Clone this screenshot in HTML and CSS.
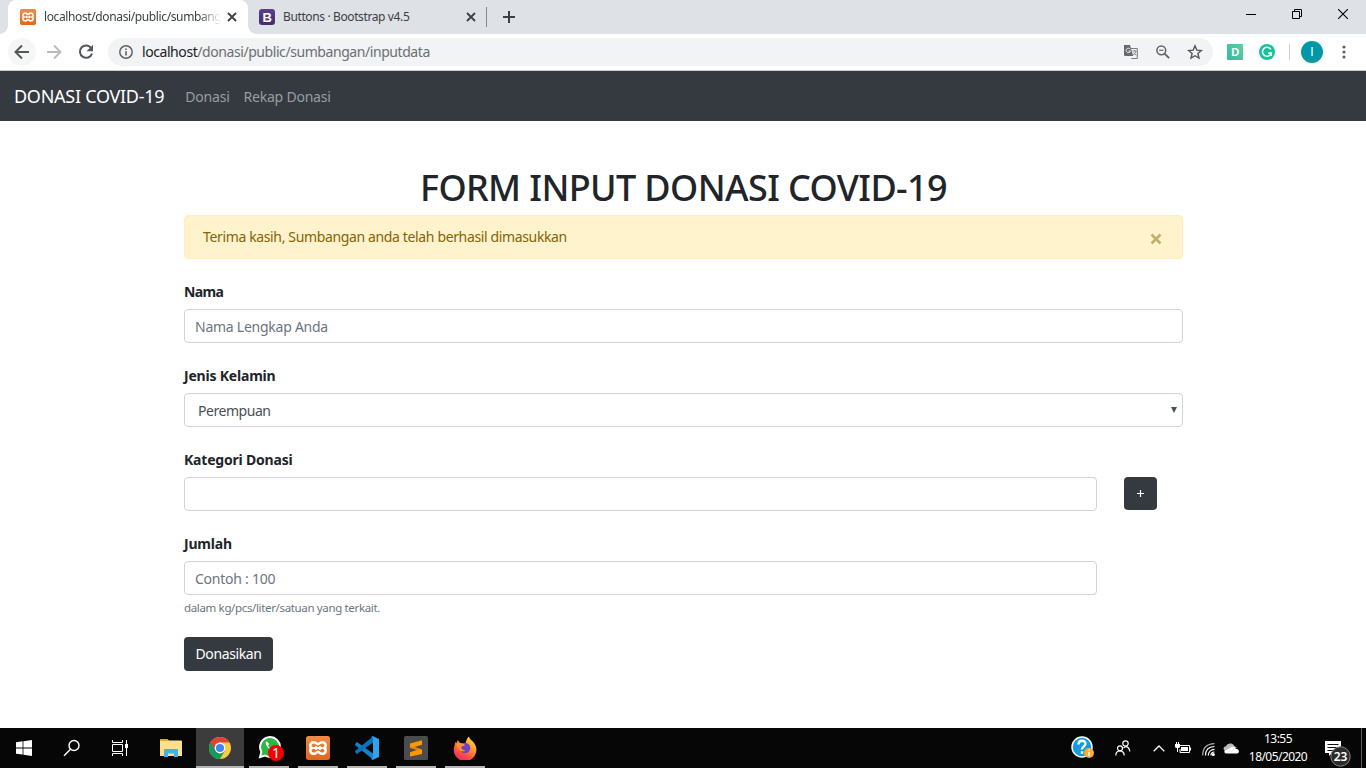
FILE: index.html
```html
<!DOCTYPE html>
<html lang="id">
<head>
<meta charset="utf-8">
<title>Donasi Covid-19</title>
<link rel="stylesheet" href="styles.css">
</head>
<body>
<svg class="defs" width="0" height="0">
  <defs>
    <linearGradient id="orange" x1="0" y1="0" x2="0" y2="1"><stop offset="0" stop-color="#f08b45"/><stop offset="1" stop-color="#e2661a"/></linearGradient>
    <linearGradient id="violet" x1="0" y1="0" x2="0" y2="1"><stop offset="0" stop-color="#5d3f8c"/><stop offset="1" stop-color="#462b6e"/></linearGradient>
    <linearGradient id="mint" x1="0" y1="1" x2="1" y2="0"><stop offset="0" stop-color="#30bb9a"/><stop offset="1" stop-color="#65cda4"/></linearGradient>
    <linearGradient id="fire" x1=".8" y1="0" x2=".3" y2="1"><stop offset="0" stop-color="#ffe044"/><stop offset=".4" stop-color="#ff9a28"/><stop offset=".75" stop-color="#ff4a45"/><stop offset="1" stop-color="#e72572"/></linearGradient>
    <symbol id="xampp" viewBox="0 0 24 24">
      <rect width="24" height="24" rx="2.5" fill="url(#orange)"/>
      <path d="M8 6.200c-4 0-5 4.600-2 5.800-3 1.200-2 5.800 2 5.800 2.200 0 2.700-2 4-2s1.800 2 4 2c4 0 5-4.600 2-5.800 3-1.200 2-5.800-2-5.800-2.200 0-2.700 2-4 2s-1.800-2-4-2z" fill="none" stroke="#fff" stroke-width="2.500"/>
      <path d="M8 12h8M10 10v4M14 10v4" stroke="#fff" stroke-width="1.800"/>
    </symbol>
  </defs>
</svg>

<header class="tabstrip">
  <div class="tab tab-active">
    <svg class="favicon" width="16" height="16"><use href="#xampp"/></svg>
    <span class="tab-title fade">localhost/donasi/public/sumbang</span>
    <svg class="close" width="10" height="10" viewBox="0 0 10 10"><path d="M1 1l8 8M9 1l-8 8" stroke="#3c4043" stroke-width="1.800"/></svg>
  </div>
  <div class="tab">
    <svg class="favicon" width="16" height="16" viewBox="0 0 16 16"><rect width="16" height="16" rx="3" fill="url(#violet)"/><text x="8" y="12.600" class="fav-b">B</text></svg>
    <span class="tab-title">Buttons · Bootstrap v4.5</span>
    <svg class="close" width="10" height="10" viewBox="0 0 10 10"><path d="M1 1l8 8M9 1l-8 8" stroke="#3c4043" stroke-width="1.800"/></svg>
  </div>
  <span class="tab-divider"></span>
  <svg class="newtab" width="12" height="12" viewBox="0 0 12 12"><path d="M6 0v12M0 6h12" stroke="#3c4043" stroke-width="2"/></svg>
  <div class="window-buttons">
    <svg width="10" height="10" viewBox="0 0 10 10"><path d="M0 5.500h10" stroke="#000"/></svg>
    <svg width="10" height="10" viewBox="0 0 10 10"><path d="M.5 2.500h7v7h-7zM2.500 2.500v-2h7v7h-2" fill="none" stroke="#000"/></svg>
    <svg width="10" height="10" viewBox="0 0 10 10"><path d="M0 0l10 10M10 0L0 10" stroke="#000" stroke-width="1.100"/></svg>
  </div>
</header>

<div class="toolbar">
  <span class="nav-back"><svg width="16" height="16" viewBox="0 0 16 16"><path d="M15 8H2M8 1.500L1.500 8 8 14.500" fill="none" stroke="#54585d" stroke-width="2"/></svg></span>
  <svg class="nav-fwd" width="16" height="16" viewBox="0 0 16 16"><path d="M1 8h13M8 1.500L14.500 8 8 14.500" fill="none" stroke="#babcbe" stroke-width="2"/></svg>
  <svg class="nav-reload" width="16" height="16" viewBox="0 0 16 16"><path d="M13.300 4.200A6.200 6.200 0 1 0 14 9.600" fill="none" stroke="#54585d" stroke-width="2"/><path d="M15 .8v6.400H8.600z" fill="#54585d"/></svg>
  <div class="omnibox">
    <svg width="14" height="14" viewBox="0 0 14 14"><circle cx="7" cy="7" r="6.200" fill="none" stroke="#5f6368" stroke-width="1.500"/><path d="M7 6.200v4.300M7 3.400v1.600" stroke="#5f6368" stroke-width="1.600"/></svg>
    <span class="url"><b>localhost</b>/donasi/public/sumbangan/inputdata</span>
    <svg class="ic-translate" width="14" height="14" viewBox="0 0 14 14"><path d="M6 3.500h7.300v10H7" fill="none" stroke="#787c80"/><path d="M0 0h6l3.200 11H1.200A1.200 1.200 0 0 1 0 10z" fill="#66696e"/><path d="M6.300 4.300A2.200 2.200 0 1 0 6.500 6H4.600M7.500 11l-.8 2.700L9.200 11" fill="none" stroke="#f1f3f4"/><path d="M8.500 6h4M10.500 5v1M12 6c-.4 2-1.500 3-3 4M9.800 7.500l2.500 3" fill="none" stroke="#787c80" stroke-width=".9"/></svg>
    <svg class="ic-zoom" width="14" height="14" viewBox="0 0 14 14"><circle cx="5.300" cy="5.300" r="4.400" fill="none" stroke="#5f6368" stroke-width="1.500"/><path d="M8.600 8.600l4.500 4.500" stroke="#5f6368" stroke-width="1.800"/><path d="M3.200 5.300h4.200" stroke="#5f6368" stroke-width="1.200"/></svg>
    <svg class="ic-star" width="16" height="16" viewBox="0 0 16 16"><path d="M8 1.800l1.800 4.300 4.600.4-3.500 3 1.100 4.600L8 11.700l-4 2.400 1.100-4.600-3.500-3 4.600-.4z" fill="none" stroke="#54585d" stroke-width="1.400"/></svg>
  </div>
  <svg class="ext-d" width="16" height="16" viewBox="0 0 16 16"><rect width="16" height="16" rx="1" fill="url(#mint)"/><text x="8.200" y="12" class="ext-letter">D</text></svg>
  <svg class="ext-g" width="16" height="16" viewBox="0 0 16 16"><circle cx="8" cy="8" r="8" fill="#15c39a"/><path d="M11.800 5.400A4.500 4.500 0 1 0 12.300 9H9.200M12.300 9v3" fill="none" stroke="#fff" stroke-width="1.500"/></svg>
  <span class="bar-divider"></span>
  <span class="avatar">I</span>
  <svg class="kebab" width="4" height="14" viewBox="0 0 4 14"><g fill="#5f6368"><circle cx="2" cy="2" r="1.600"/><circle cx="2" cy="7" r="1.600"/><circle cx="2" cy="12" r="1.600"/></g></svg>
</div>

<nav class="navbar">
  <a class="brand">DONASI COVID-19</a>
  <a class="nav-link">Donasi</a>
  <a class="nav-link">Rekap Donasi</a>
</nav>

<main class="page">
  <h1>FORM INPUT DONASI COVID-19</h1>
  <div class="alert">
    <span class="alert-text">Terima kasih, Sumbangan anda telah berhasil dimasukkan</span>
    <svg class="dismiss" width="12" height="12" viewBox="0 0 12 12"><path d="M1.500 1.500l9 9M10.500 1.500l-9 9" stroke="#c3ae68" stroke-width="2.500"/></svg>
  </div>
  <form>
    <section class="group">
      <label class="tight">Nama</label>
      <div class="control muted">Nama Lengkap Anda</div>
    </section>
    <section class="group">
      <label>Jenis Kelamin</label>
      <div class="control select">Perempuan<svg width="6" height="6" viewBox="0 0 6 6"><path d="M0 0h6L3 6z" fill="#495057"/></svg></div>
    </section>
    <section class="group">
      <label>Kategori Donasi</label>
      <div class="row"><div class="control short"></div><button type="button" class="btn plus"><svg width="7" height="7" viewBox="0 0 7 7"><path d="M3.500 0v7M0 3.500h7" stroke="#fff" stroke-width="1.200"/></svg></button></div>
    </section>
    <section class="group">
      <label>Jumlah</label>
      <div class="control short muted">Contoh : 100</div>
      <small>dalam kg/pcs/liter/satuan yang terkait.</small>
    </section>
    <button type="button" class="btn submit">Donasikan</button>
  </form>
</main>

<footer class="taskbar">
  <span class="task wide"><svg width="16" height="16" viewBox="0 0 16 16"><path d="M0 2.300L6.600 1.300v6.200H0zM7.400 1.200L16 0v7.500H7.400zM0 8.400h6.600v6.200L0 13.700zM7.400 8.400H16V16l-8.600-1.200z" fill="#fff"/></svg></span>
  <span class="task wide"><svg width="18" height="18" viewBox="0 0 18 18"><circle cx="11" cy="6.500" r="5" fill="none" stroke="#fff" stroke-width="1.400"/><path d="M7.500 10.200L1 16.700" stroke="#fff" stroke-width="1.400"/></svg></span>
  <span class="task wide"><svg width="16" height="16" viewBox="0 0 16 16"><path d="M.5 0v2.500h10V0M.5 16v-2.500h10V16M.5 4.500h10v7H.5zM14.500 0v4M14.500 8v8" fill="none" stroke="#fff"/><path d="M13 4h3v4h-3z" fill="#fff"/></svg></span>
  <span class="task wide explorer"><svg width="22" height="18" viewBox="0 0 22 18"><path d="M0 1q0-1 1-1h6l2 1.500h12q1 0 1 1V17H0z" fill="#fde08c"/><path d="M1 0h6l1 2H0z" fill="#e5aa22"/><path d="M4 18v-7q0-1 1-1h12q1 0 1 1v7h-4v-3.500H8V18z" fill="#3eb3e6"/></svg></span>
  <span class="task wide current"><svg width="22" height="22" viewBox="0 0 22 22"><circle cx="11" cy="11" r="11" fill="#fcca3d"/><path d="M1.470 5.500A11 11 0 0 0 11 22l4.760-8.250L11 11z" fill="#149b57"/><path d="M1.470 5.500A11 11 0 0 1 20.530 5.500H11a5.500 5.500 0 0 0-4.760 8.250z" fill="#dc4437"/><circle cx="11" cy="11" r="5.400" fill="#fff"/><circle cx="11" cy="11" r="4.100" fill="#4285f4"/></svg></span>
  <span class="task open"><svg class="whatsapp" width="26" height="26" viewBox="0 0 26 26"><path d="M2 22l1.400-5.200A9.900 9.900 0 1 1 7.200 20.600z" fill="#2cb742" stroke="#fff" stroke-width="2"/><path d="M8.600 6.200c-1.800 1.500-.8 4.200 1.500 6.500s5 3.300 6.500 1.500l-2.300-2-1.300 1.100c-1.300-.4-2.500-1.600-2.900-2.900l1-1.300z" fill="#fff"/><circle cx="18" cy="18" r="8" fill="#f70000"/><text x="18" y="22.800" class="badge-text">1</text></svg></span>
  <span class="task open"><svg width="24" height="24"><use href="#xampp"/></svg></span>
  <span class="task open"><svg width="24" height="24" viewBox="0 0 24 24"><path d="M2.300 6.200L18 17.500V23.500L.3 9.200q-.5-.6 0-1.200l1.200-1.700q.4-.4.8-.1z" fill="#1780c8"/><path d="M2.300 17.800L18 6.500V.5L.3 14.800q-.5.600 0 1.200l1.200 1.700q.4.400.8.100z" fill="#0b72bd"/><path d="M17.500 0L24 3v18l-6.500 3-2-1.500c1.500.500 2.500-.2 2.500-1.500V3c0-1.300-1-2-2.500-1.500z" fill="#2ea3ee"/></svg></span>
  <span class="task open"><svg width="24" height="24" viewBox="0 0 24 24"><rect width="24" height="24" rx="1.500" fill="#4c4c4c"/><path d="M18 4.200v4.600L10.500 11 18 13.400V18L6 20.500v-4.300l7-2.200-7-2.200V7.500z" fill="#ff9800"/><path d="M6 11.800l7 2.200 5-.6L10.500 11z" fill="#e08100"/></svg></span>
  <span class="task open"><svg width="24" height="24" viewBox="0 0 24 24"><path d="M2.500 6L4 7l.5-3 3 3.500 5 .5C13 4 14.500 1.500 16 .5c.5 3.500 5 4.500 6.500 9A11.300 11.300 0 1 1 1 11.500z" fill="url(#fire)"/><circle cx="12" cy="12" r="5.300" fill="#7043c4"/><path d="M4 8c3-2 6-1 8 1-1 1.500-3 .8-4 2 .5 2 2 3.500 4.500 3.500-2 1.500-5 1-6.500-1S3 10 4 8z" fill="#ff9430"/></svg></span>
  <div class="tray">
    <svg class="tr-help" width="24" height="24" viewBox="0 0 24 24"><circle cx="11" cy="11" r="10" fill="#149add" stroke="#fff" stroke-width="1.500"/><path d="M7.500 8.500c0-5 7-4.600 7-.7 0 2.500-3.500 2.700-3.500 5.700M11 15.300v2.500" fill="none" stroke="#fff" stroke-width="2.400"/><circle cx="18" cy="17" r="5" fill="#f8ac30"/><path d="M18 16v4M18 13.500v1.300" stroke="#fff" stroke-width="1.400"/></svg>
    <svg class="tr-people" width="16" height="16" viewBox="0 0 16 16"><g fill="none" stroke="#fff" stroke-width="1.200"><circle cx="10.500" cy="3.500" r="2.700"/><circle cx="5" cy="8.300" r="2.500"/><path d="M.8 15.500c0-6 8.400-6 8.400 0M8.500 8c3-3 6-.5 6.300 3.500"/></g></svg>
    <svg class="tr-up" width="12" height="7" viewBox="0 0 12 7"><path d="M.7 6.300L6 1l5.300 5.300" fill="none" stroke="#fff" stroke-width="1.300"/></svg>
    <svg class="tr-bat" width="16" height="12" viewBox="0 0 16 12"><path d="M4 3.500h10.500v7H5V7M15.500 5.500v3" fill="none" stroke="#fff"/><path d="M6 5h7v4H6zM0 2h5v2.500q0 1.500-1.500 1.500H3v4H2V6Q0 6 0 4.500zM1 0h1v2H1zM3 0h1v2H3z" fill="#fff"/></svg>
    <svg class="tr-wifi" width="13" height="13" viewBox="0 0 13 13"><g fill="none" stroke="#aaa" stroke-width="1.200"><path d="M.7 12.500C.7 5 5 1 12.500.7"/><path d="M3.500 12.500C3.500 7 7 3.700 12.500 3.500" stroke="#fff"/><path d="M6.300 12.500c0-3.500 2.700-6 6.200-6.200M9 12.500C9 10.500 10.500 9 12.500 9" stroke="#fff"/></g><circle cx="11.300" cy="11.500" r="1.500" fill="#fff"/></svg>
    <svg class="tr-cloud" width="16" height="11" viewBox="0 0 16 11"><path d="M2 8C-.5 6 .5 3.500 3 3.300 4 .5 9-.8 11.200 2.800L14 5z" fill="#bbb"/><path d="M3 10.500C.8 10 .8 7.500 3 7l4-2c2-2 5-1.500 5.500.8 4 0 4.500 4.200 1.500 4.700z" fill="#fff"/></svg>
    <div class="clock"><span>13:55</span><span>18/05/2020</span></div>
    <svg class="tr-note" width="28" height="26" viewBox="0 0 28 26"><path d="M0 0h16v12H7l-3 3v-3H0z" fill="#fff"/><path d="M2.500 3.500h11M2.500 6.500h11M2.500 9.500h6" stroke="#111"/><circle cx="15.500" cy="15.500" r="9.700" fill="#2c2c2c" stroke="#858585"/><text x="15.500" y="20.200" class="note-text">23</text></svg>
    <span class="show-desktop"></span>
  </div>
</footer>
</body>
</html>
```

FILE: styles.css
```css
* { box-sizing: border-box; }
body { margin: 0; width: 1366px; height: 768px; overflow: hidden; display: flex; flex-direction: column; background: #fff; color: #212529; font-family: "Noto Sans", "Open Sans", sans-serif; font-size: 14px; }
svg { display: block; flex: none; }
.defs { position: absolute; }
span { white-space: nowrap; }

.tabstrip { height: 34px; flex: none; display: flex; align-items: center; padding-left: 8px; background: #dee1e6; }
.tab { display: flex; align-items: center; width: 238px; height: 34px; padding: 0 10px 0 11px; font-size: 12px; letter-spacing: -0.38px; color: #3c4043; }
.tab-active { width: 240px; padding: 0 11px 0 12px; background: #fff; border-radius: 8px 8px 0 0; }
.tab-active::before, .tab-active::after { content: ""; width: 8px; height: 8px; position: absolute; top: 26px; left: 0; background: radial-gradient(circle at 0 0, transparent 7.5px, #fff 8px); }
.tab-active::after { left: 248px; background: radial-gradient(circle at 100% 0, transparent 7.5px, #fff 8px); }
.tab-title { flex: 1; margin: -1px 8px 0; overflow: hidden; }
.fade { margin-right: 4px; -webkit-mask-image: linear-gradient(90deg, #000 155px, transparent 177px); mask-image: linear-gradient(90deg, #000 155px, transparent 177px); }
.fav-b { font: bold 13px "Liberation Sans", sans-serif; fill: #fff; text-anchor: middle; }
.tab-divider { width: 1px; height: 20px; background: #858a8f; }
.newtab { margin-left: 16px; }
.window-buttons { margin-left: auto; display: flex; gap: 36px; padding: 0 18px 6px 0; }

.toolbar { height: 37px; flex: none; display: flex; align-items: center; padding: 0 19px 0 8px; border-bottom: 1px solid #c9cbcd; }
.nav-back { width: 28px; height: 28px; border-radius: 50%; background: #f6f6f7; display: grid; place-items: center; }
.nav-fwd { margin-left: 10px; }
.nav-reload { margin: 0 14px 0 16px; }
.omnibox { flex: none; width: 1105px; height: 28px; border-radius: 14px; background: #f1f3f4; display: flex; align-items: center; padding: 0 10px 0 11px; }
.url { flex: 1; margin: -1px 0 0 9px; letter-spacing: -0.43px; color: #6b6f73; }
.url b { font-weight: 400; color: #202124; }
.ic-zoom { margin: 0 17px 0 18px; }
.ext-d { margin-left: 14px; }
.ext-letter { font: bold 11px "Liberation Sans", sans-serif; fill: #fff; text-anchor: middle; }
.ext-g { margin-left: 16px; }
.bar-divider { width: 1px; height: 16px; background: #c9cbce; margin: 0 11px 0 14px; }
.avatar { width: 22px; height: 22px; border-radius: 50%; background: #0097a7; color: #fff; font: 12px/22px "Liberation Sans", sans-serif; text-align: center; }
.kebab { margin-left: 19px; }

.navbar { height: 50px; flex: none; display: flex; align-items: center; padding: 0 14px; background: #343a40; }
.brand { color: #fff; font-size: 18px; letter-spacing: -0.27px; margin-right: 21px; }
.nav-link { color: #9a9da0; letter-spacing: -0.22px; margin-right: 14px; }

.page { flex: 1; width: 999px; margin: 0 0 0 184px; padding-top: 45px; }
h1 { margin: 0 0 6px; height: 43px; line-height: 43px; font-size: 36px; font-weight: 500; letter-spacing: -0.62px; text-align: center; }
.alert { height: 44px; display: flex; align-items: center; justify-content: space-between; padding: 0 20px 0 18px; border: 1px solid #ffeeba; border-radius: 4px; background: #fff3cd; color: #856404; }
.alert-text { letter-spacing: -0.36px; margin-top: -2px; }
.dismiss { margin-top: 3px; }
form { padding-top: 22px; }
.group { height: 84px; }
label { display: block; height: 28px; line-height: 22px; font-weight: 700; letter-spacing: -0.2px; }
.tight { letter-spacing: -0.6px; }
.control { height: 34px; display: flex; align-items: center; padding: 0 10px; border: 1px solid #ced4da; border-radius: 4px; color: #495057; letter-spacing: -0.25px; }
.muted { color: #6c757d; }
.select { padding: 0 5px 0 13px; justify-content: space-between; letter-spacing: -0.45px; }
.short { width: 913px; }
.row { display: flex; gap: 27px; }
.btn { border: 0; border-radius: 4px; background: #343a40; color: #fff; font: 14px "Noto Sans", sans-serif; letter-spacing: -0.4px; padding: 0; display: grid; place-items: center; }
.plus { width: 33px; height: 33px; }
small { display: block; font-size: 11.5px; line-height: 17px; letter-spacing: -0.35px; padding-top: 4px; color: #6c757d; }
.submit { width: 89px; height: 34px; margin-top: 20px; padding-bottom: 2px; }

.taskbar { height: 40px; flex: none; display: flex; align-items: stretch; background: #060606; color: #fff; }
.task { width: 40px; margin-left: 9px; display: grid; place-items: center; }
.wide { width: 48px; margin-left: 0; }
.explorer { margin-left: 3px; }
.current { margin: 0 -4px 0 1px; background: #3c3c3c; border-bottom: 2px solid #b5b5b5; padding-top: 2px; }
.open { border-bottom: 2px solid #b5b5b5; padding-top: 2px; }
.whatsapp { margin-left: 3px; }
.badge-text { font: 14px "Noto Sans", sans-serif; fill: #fff; text-anchor: middle; }
.tray { margin-left: auto; display: flex; align-items: center; }
.tr-people { margin-left: 20px; }
.tr-up { margin-left: 22px; }
.tr-bat { margin-left: 10px; }
.tr-wifi { margin: 2px 0 0 11px; }
.tr-cloud { margin-left: 8px; }
.clock { width: 58px; margin: 0 18px 0 10px; font-size: 12px; line-height: 18px; letter-spacing: -0.55px; display: flex; flex-direction: column; align-items: center; }
.tr-note { margin: 12px 8px 0 0; }
.note-text { font: 600 12px "Noto Sans", sans-serif; fill: #fff; text-anchor: middle; }
.show-desktop { width: 5px; height: 40px; border-left: 1px solid #5e5e5e; }
```
